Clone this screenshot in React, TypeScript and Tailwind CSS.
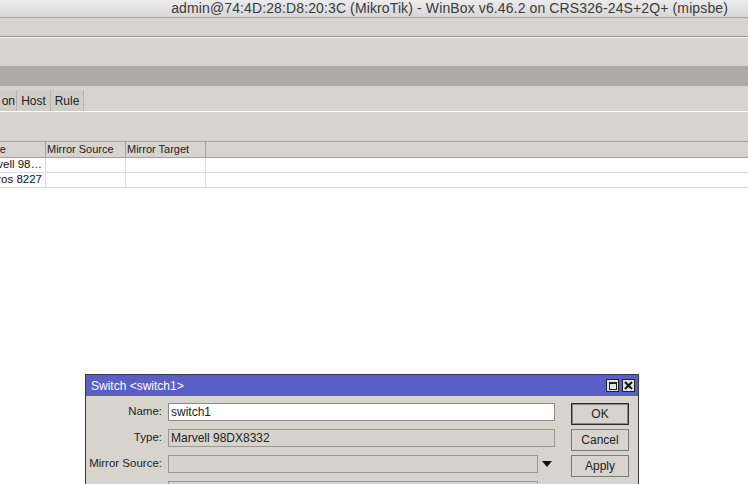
import React from "react";

const tabs = [
  { label: "on", w: "w-[17px]", justify: "justify-end pr-[1px]" },
  { label: "Host", w: "w-[34px]", justify: "justify-center" },
  { label: "Rule", w: "w-[33px]", justify: "justify-center" },
];

const rows = [
  { type: "Marvell 98…" },
  { type: "Atheros 8227" },
];

function TitleButtons() {
  return (
    <div className="flex items-center gap-[3px]">
      <div className="flex h-[13px] w-[13px] items-center justify-center border border-[#222] bg-[#e4e2dd]">
        <div className="h-[8px] w-[8px] border border-[#222] border-t-2" />
      </div>
      <div className="flex h-[13px] w-[13px] items-center justify-center border border-[#222] bg-[#e4e2dd]">
        <svg width="9" height="9" viewBox="0 0 9 9">
          <path d="M1 1 L8 8 M8 1 L1 8" stroke="#111" strokeWidth="2" />
        </svg>
      </div>
    </div>
  );
}

function Field({ label, value, white, narrow, arrow }: { label: string; value?: string; white?: boolean; narrow?: boolean; arrow?: boolean }) {
  return (
    <div className="flex h-[18px] items-center">
      <div className="w-[77px] whitespace-nowrap pr-[1px] text-right text-[11.5px] text-[#222]">{label}</div>
      <div
        className={
          "ml-[5px] flex h-[18px] items-center border px-[2px] text-[12px] text-[#222] " +
          (white ? "bg-white border-[#8c8c8c] " : "bg-[#d6d3cc] border-[#9a9893] ") +
          (narrow ? "w-[370px]" : "w-[387px]")
        }
      >
        {value}
      </div>
      {arrow && (
        <svg className="ml-[4px]" width="10" height="6" viewBox="0 0 10 6">
          <path d="M0 0 L10 0 L5 6 Z" fill="#111" />
        </svg>
      )}
    </div>
  );
}

export default function App() {
  return (
    <div className="relative h-[484px] w-[748px] overflow-hidden bg-white font-['Liberation_Sans',Arial,sans-serif]">
      {/* window title */}
      <div className="flex h-[18px] items-center justify-end whitespace-nowrap border-b border-[#a3a3a3] bg-gradient-to-b from-[#ececec] to-[#d7d7d7] pr-[20px] text-[14px] tracking-[0.12px] text-[#3b3b3b]">
        admin@74:4D:28:D8:20:3C (MikroTik) - WinBox v6.46.2 on CRS326-24S+2Q+ (mipsbe)
      </div>

      {/* toolbar */}
      <div className="h-[19px] border-b border-[#8f8f8f] bg-[#d7d4cd]" />
      <div className="h-px bg-white" />
      <div className="h-[28px] bg-[#d7d4cd]" />
      <div className="h-[20px] bg-[#aeaba5]" />

      {/* tabs */}
      <div className="flex h-[25px] items-end bg-[#d7d4cd]">
        {tabs.map((t) => (
          <div
            key={t.label}
            className={"flex h-[21px] items-center border-r border-[#b5b2ab] bg-[#d1cec7] text-[12px] text-[#222] " + t.w + " " + t.justify}
          >
            {t.label}
          </div>
        ))}
      </div>
      <div className="h-px bg-white" />
      <div className="h-[29px] bg-[#d7d4cd]" />

      {/* table */}
      <div className="flex h-[17px] border-y border-[#a3a09a] bg-[#d7d4cd] text-[11px] text-[#222]">
        <div className="flex w-[46px] items-center justify-end overflow-hidden whitespace-nowrap border-r border-[#a3a09a] pr-[39px]">
          Type
        </div>
        <div className="flex w-[80px] items-center border-r border-[#a3a09a] pl-[1px]">Mirror Source</div>
        <div className="flex w-[80px] items-center border-r border-[#a3a09a] pl-[1px]">Mirror Target</div>
        <div className="flex-1" />
      </div>
      {rows.map((r) => (
        <div key={r.type} className="flex h-[15px] border-b border-[#dcdcdc] text-[11.5px] text-[#111]">
          <div className="flex w-[46px] items-center justify-end overflow-hidden whitespace-nowrap border-r border-[#dcdcdc] pr-[3px]">
            {r.type}
          </div>
          <div className="w-[80px] border-r border-[#dcdcdc]" />
          <div className="w-[80px] border-r border-[#dcdcdc]" />
          <div className="flex-1" />
        </div>
      ))}

      {/* dialog window */}
      <div className="absolute left-[85px] top-[374px] w-[554px] border border-[#3a3a3a] bg-[#d7d4cd]">
        <div className="flex h-[21px] items-center justify-between bg-[#5a5ec7] pl-[5px] pr-[3px] text-[12px] text-white">
          <span>Switch &lt;switch1&gt;</span>
          <TitleButtons />
        </div>
        <div className="flex pt-[7px] pb-[20px]">
          <div className="flex flex-col gap-[8px]">
            <Field label="Name:" value="switch1" white />
            <Field label="Type:" value="Marvell 98DX8332" />
            <Field label="Mirror Source:" narrow arrow />
            <Field label="" narrow />
          </div>
          <div className="ml-[16px] flex flex-col gap-[4px]">
            <div className="flex h-[22px] w-[58px] items-center justify-center border border-[#2b2b2b] bg-[#d7d4cd] text-[12px] text-[#222] shadow-[inset_0_0_0_1px_#8a8883]">
              OK
            </div>
            <div className="flex h-[22px] w-[58px] items-center justify-center border border-[#7d7b76] bg-[#d7d4cd] text-[12px] text-[#222]">
              Cancel
            </div>
            <div className="flex h-[22px] w-[58px] items-center justify-center border border-[#7d7b76] bg-[#d7d4cd] text-[12px] text-[#222]">
              Apply
            </div>
          </div>
        </div>
      </div>
    </div>
  );
}
